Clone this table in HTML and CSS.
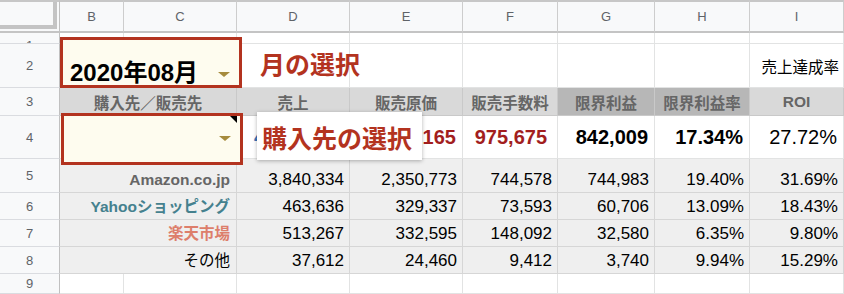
FILE: index.html
```html
<!DOCTYPE html>
<html lang="ja">
<head>
<meta charset="utf-8">
<title>Sheet</title>
<link rel="stylesheet" href="styles.css">
</head>
<body>
<div class="sheet">
  <!-- column headers -->
  <div class="corner"><div class="freeze"></div></div>
  <div class="colhead">B</div>
  <div class="colhead">C</div>
  <div class="colhead">D</div>
  <div class="colhead">E</div>
  <div class="colhead">F</div>
  <div class="colhead">G</div>
  <div class="colhead">H</div>
  <div class="colhead">I</div>

  <!-- row 1 -->
  <div class="rowhead r1">1</div>
  <div class="cell"></div><div class="cell"></div><div class="cell"></div><div class="cell"></div>
  <div class="cell"></div><div class="cell"></div><div class="cell"></div><div class="cell"></div>

  <!-- row 2 -->
  <div class="rowhead">2</div>
  <div class="cell"></div>
  <div class="cell"></div>
  <div class="cell title">月の選択</div>
  <div class="cell"></div>
  <div class="cell"></div>
  <div class="cell"></div>
  <div class="cell"></div>
  <div class="cell small">売上達成率</div>

  <!-- row 3 -->
  <div class="rowhead">3</div>
  <div class="cell th span2">購入先／販売先</div>
  <div class="cell th">売上</div>
  <div class="cell th">販売原価</div>
  <div class="cell th">販売手数料</div>
  <div class="cell th dark">限界利益</div>
  <div class="cell th dark">限界利益率</div>
  <div class="cell th">ROI</div>

  <!-- row 4 -->
  <div class="rowhead">4</div>
  <div class="cell span2 cream"></div>
  <div class="cell tot blue">4,854,849</div>
  <div class="cell tot red">3,037,165</div>
  <div class="cell tot red wide">975,675</div>
  <div class="cell tot">842,009</div>
  <div class="cell tot">17.34%</div>
  <div class="cell tot reg">27.72%</div>

  <!-- row 5 -->
  <div class="rowhead">5</div>
  <div class="cell dt span2 lab amz">Amazon.co.jp</div>
  <div class="cell dt">3,840,334</div>
  <div class="cell dt">2,350,773</div>
  <div class="cell dt">744,578</div>
  <div class="cell dt">744,983</div>
  <div class="cell dt">19.40%</div>
  <div class="cell dt">31.69%</div>

  <!-- row 6 -->
  <div class="rowhead">6</div>
  <div class="cell dt span2 lab yahoo">Yahooショッピング</div>
  <div class="cell dt">463,636</div>
  <div class="cell dt">329,337</div>
  <div class="cell dt">73,593</div>
  <div class="cell dt">60,706</div>
  <div class="cell dt">13.09%</div>
  <div class="cell dt">18.43%</div>

  <!-- row 7 -->
  <div class="rowhead">7</div>
  <div class="cell dt span2 lab rakuten">楽天市場</div>
  <div class="cell dt">513,267</div>
  <div class="cell dt">332,595</div>
  <div class="cell dt">148,092</div>
  <div class="cell dt">32,580</div>
  <div class="cell dt">6.35%</div>
  <div class="cell dt">9.80%</div>

  <!-- row 8 -->
  <div class="rowhead">8</div>
  <div class="cell dt span2 lab other">その他</div>
  <div class="cell dt">37,612</div>
  <div class="cell dt">24,460</div>
  <div class="cell dt">9,412</div>
  <div class="cell dt">3,740</div>
  <div class="cell dt">9.94%</div>
  <div class="cell dt">15.29%</div>

  <!-- row 9 -->
  <div class="rowhead">9</div>
  <div class="cell"></div><div class="cell"></div><div class="cell"></div><div class="cell"></div>
  <div class="cell"></div><div class="cell"></div><div class="cell"></div><div class="cell"></div>

  <!-- overlays -->
  <div class="select month">2020年08月<span class="arrow"></span></div>
  <div class="select vendor"><span class="note"></span><span class="arrow"></span></div>
  <div class="tip">購入先の選択</div>
</div>
</body>
</html>
```

FILE: styles.css
```css
body {
  margin: 0;
  background: #ffffff;
  font-family: "Liberation Sans", Arial, "Noto Sans CJK JP", sans-serif;
}

.sheet {
  position: relative;
  display: grid;
  grid-template-columns: 60px 64px 113px 113px 113px 95px 97px 95px 94px;
  grid-template-rows: 33px 11px 44px 28px 43px 34px 27px 27px 27px 20px;
  width: 844px;
  height: 294px;
  overflow: hidden;
}

.cell {
  box-sizing: border-box;
  min-width: 0;
  border-right: 1px solid #e2e3e3;
  border-bottom: 1px solid #e2e3e3;
  display: flex;
  align-items: flex-end;
  justify-content: flex-end;
  padding: 0 5px 3px 0;
  white-space: nowrap;
  overflow: hidden;
  font-size: 17px;
  color: #000000;
}

.span2 { grid-column: span 2; }

/* headers */
.corner {
  box-sizing: border-box;
  background: #f8f9fa;
  border-top: 2px solid #c7c7c7;
  border-right: 1px solid #c0c0c0;
  border-bottom: 2px solid #c4c4c4;
}
.freeze {
  box-sizing: border-box;
  width: 57px;
  height: 27px;
  border-right: 4px solid #c4c4c4;
  border-bottom: 4px solid #c4c4c4;
}

.colhead {
  box-sizing: border-box;
  background: #f8f9fa;
  border-top: 2px solid #c7c7c7;
  border-right: 1px solid #cdcdcd;
  border-bottom: 2px solid #c4c4c4;
  display: flex;
  align-items: center;
  justify-content: center;
  color: #5f6368;
  font-size: 13px;
}

.rowhead {
  box-sizing: border-box;
  background: #f8f9fa;
  border-right: 1px solid #c0c0c0;
  border-bottom: 1px solid #dadce0;
  display: flex;
  align-items: center;
  justify-content: center;
  color: #5f6368;
  font-size: 13px;
  overflow: hidden;
}
.rowhead.r1 {
  align-items: flex-start;
  padding-top: 5px;
}

/* row 2 */
.title {
  justify-content: flex-start;
  align-items: center;
  overflow: visible;
  padding: 0 0 6px 23px;
  color: #b3331f;
  font-size: 25px;
  font-weight: bold;
}
.small {
  align-items: center;
  padding: 0 4px 0 0;
  font-size: 15.5px;
}

/* row 3 */
.th {
  background: #d9d9d9;
  border-right: 1px solid #c9c9c9;
  border-bottom: 1px solid #c9c9c9;
  justify-content: center;
  align-items: center;
  padding: 0;
  font-size: 15.5px;
  font-weight: bold;
  color: #666666;
}
.th.dark { background: #b7b7b7; }

/* row 4 */
.cream { background: #fefcef; }
.tot {
  align-items: center;
  padding: 0 6px 0 0;
  font-size: 20px;
  font-weight: bold;
}
.tot.blue { color: #3b73b9; }
.tot.red { color: #a21e1e; }
.tot.wide { padding-right: 10px; }
.tot.reg { font-weight: normal; }

/* data rows */
.dt {
  background: #efefef;
  border-right: 1px solid #d6d6d6;
  border-bottom: 1px solid #d6d6d6;
  padding-bottom: 2px;
}
.lab {
  font-weight: bold;
  font-size: 15.5px;
  padding-right: 6px;
  padding-bottom: 3px;
}
.amz { color: #666666; }
.yahoo { color: #45818e; }
.rakuten { color: #dd7e6b; }
.other { font-weight: normal; color: #000000; }

/* overlays */
.select {
  position: absolute;
  box-sizing: border-box;
  left: 60px;
  width: 182px;
  border: 3px solid #b3331f;
  background: #fefcef;
}
.select.month {
  top: 37px;
  height: 51px;
  display: flex;
  align-items: center;
  padding: 16px 0 0 7px;
  font-size: 24px;
  font-weight: bold;
  color: #000000;
}
.select.vendor {
  top: 113px;
  left: 61px;
  height: 52px;
}
.arrow {
  position: absolute;
  right: 9px;
  width: 0;
  height: 0;
  border-left: 6px solid transparent;
  border-right: 6px solid transparent;
  border-top: 5px solid #a68b3d;
}
.month .arrow { top: 32px; }
.vendor .arrow { top: 20px; }
.note {
  position: absolute;
  top: 0;
  right: 3px;
  width: 0;
  height: 0;
  border-left: 7px solid transparent;
  border-top: 7px solid #000000;
}

.tip {
  position: absolute;
  left: 257px;
  top: 112px;
  width: 165px;
  height: 48px;
  box-sizing: border-box;
  background: #ffffff;
  box-shadow: 0 1px 4px rgba(0, 0, 0, 0.3);
  display: flex;
  align-items: center;
  padding: 2px 0 0 5px;
  color: #b3331f;
  font-size: 25px;
  font-weight: bold;
  white-space: nowrap;
}
```
